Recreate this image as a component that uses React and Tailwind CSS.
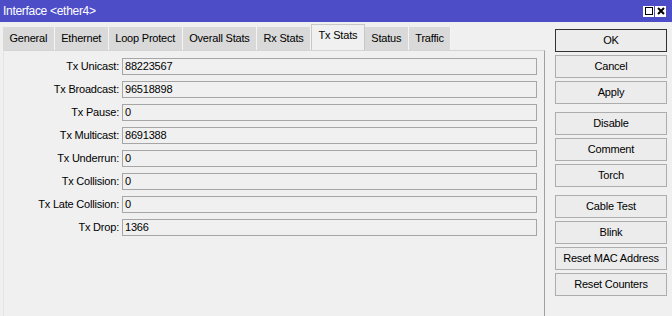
import React from 'react';

const tabs = ['General', 'Ethernet', 'Loop Protect', 'Overall Stats', 'Rx Stats', 'Tx Stats', 'Status', 'Traffic'];

const fields = [
  ['Tx Unicast', '88223567'],
  ['Tx Broadcast', '96518898'],
  ['Tx Pause', '0'],
  ['Tx Multicast', '8691388'],
  ['Tx Underrun', '0'],
  ['Tx Collision', '0'],
  ['Tx Late Collision', '0'],
  ['Tx Drop', '1366'],
];

const groups = [
  ['Cancel', 'Apply'],
  ['Disable', 'Comment', 'Torch'],
  ['Cable Test', 'Blink', 'Reset MAC Address', 'Reset Counters'],
];

function Btn({ label, primary }) {
  return (
    <div
      className={
        'w-[112px] h-[23px] flex items-center justify-center bg-[#ececec] border ' +
        (primary ? 'border-[#333333]' : 'border-[#adadad]')
      }
    >
      {label}
    </div>
  );
}

export default function App() {
  return (
    <div
      className="w-[672px] h-[316px] bg-[#f0f0f0] text-black text-[11px] tracking-[-0.2px] overflow-hidden flex flex-col"
      style={{ fontFamily: '"Liberation Sans", Arial, sans-serif' }}
    >
      {/* title bar */}
      <div className="h-[22px] bg-[#4d4dc7] flex items-center pl-[3px] pr-[6px] shrink-0">
        <span className="text-white text-[12px] tracking-[-0.3px]">Interface &lt;ether4&gt;</span>
        <div className="ml-auto flex gap-[1px]">
          <div className="w-[11px] h-[11px] bg-white flex items-center justify-center">
            <div className="w-[8px] h-[8px] border border-black" />
          </div>
          <div className="w-[11px] h-[11px] bg-white flex items-center justify-center">
            <svg width="8" height="8" viewBox="0 0 8 8">
              <path d="M1 1 L7 7 M7 1 L1 7" stroke="black" strokeWidth="2" />
            </svg>
          </div>
        </div>
      </div>

      <div className="flex flex-1">
        {/* left side */}
        <div className="w-[545px] flex flex-col pl-[3px]">
          <div className="h-[28px] flex items-end">
            {tabs.map((t) => {
              const active = t === 'Tx Stats';
              return (
                <div
                  key={t}
                  className={
                    'px-[6.5px] flex items-center border-r border-[#f4f4f4] ' +
                    (active
                      ? 'h-[26px] bg-[#f0f0f0] border-t border-l border-t-[#c8c8c8] border-l-[#c8c8c8] border-r-[#c8c8c8] pb-[4px]'
                      : 'h-[23px] bg-[#d9d9d9]')
                  }
                >
                  {t}
                </div>
              );
            })}
          </div>
          <div className="flex-1 border-t border-r border-l border-t-[#d4d4d4] border-r-[#a0a0a0] border-l-[#e4e4e4] pt-[7px] flex flex-col gap-[6px]">
            {fields.map(([label, value]) => (
              <div key={label} className="flex items-center h-[17px]">
                <div className="w-[116px] text-right pr-[1px]">{label}:</div>
                <div className="ml-[2px] w-[415px] h-[17px] border border-[#a6a6a6] bg-[#f0f0f0] pl-[2px] flex items-center">
                  {value}
                </div>
              </div>
            ))}
          </div>
        </div>

        {/* buttons */}
        <div className="pl-[10px] pt-[7px] flex flex-col gap-[8px]">
          <div className="flex flex-col gap-[3px]">
            <Btn label="OK" primary />
            {groups[0].map((b) => (
              <Btn key={b} label={b} />
            ))}
          </div>
          {groups.slice(1).map((g, i) => (
            <div key={i} className="flex flex-col gap-[3px]">
              {g.map((b) => (
                <Btn key={b} label={b} />
              ))}
            </div>
          ))}
        </div>
      </div>
    </div>
  );
}
